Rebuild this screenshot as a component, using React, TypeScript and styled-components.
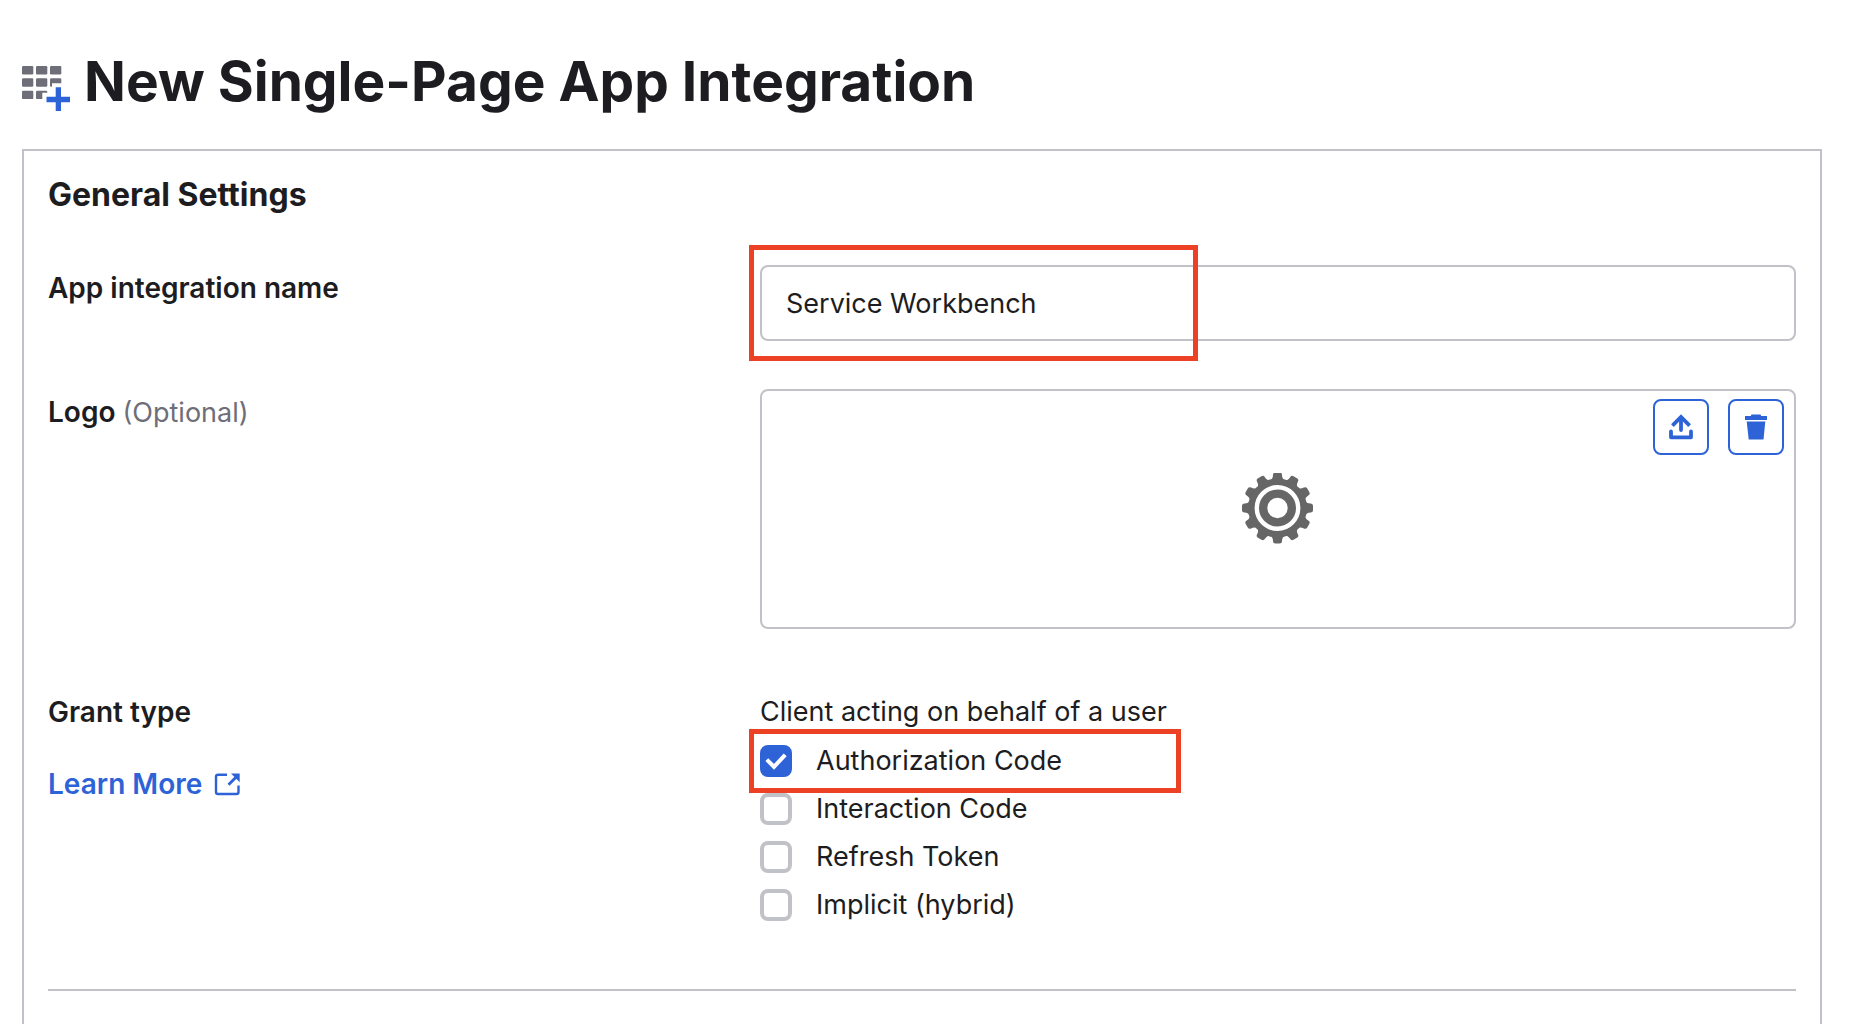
import React, { useState } from 'react';
import styled, { createGlobalStyle, css } from 'styled-components';

const color = {
  text: '#1d1d21',
  muted: '#6e6e78',
  line: '#c1c1c8',
  blue: '#2e63d8',
  red: '#ed4126',
  gear: '#666666',
};

const GlobalStyle = createGlobalStyle`
  *, *::before, *::after { box-sizing: border-box; }
  body {
    margin: 0;
    background: #ffffff;
    color: ${color.text};
    font-family: Inter, 'Liberation Sans', sans-serif;
    font-size: 27px;
    line-height: 46px;
  }
`;

const Page = styled.main`
  display: flex;
  flex-direction: column;
  min-height: 100vh;
  padding: 49px 34px 0 22px;
`;

const TitleBar = styled.header`
  display: flex;
  align-items: center;
  gap: 14px;
  margin-bottom: 36px;
`;

const TitleIcon = styled.svg`
  flex: none;
  width: 48px;
  height: 46px;
  margin-top: 14px;
`;

const Title = styled.h1`
  margin: 0;
  font-size: 55px;
  line-height: 64px;
  font-weight: 700;
`;

const Panel = styled.section`
  flex: 1;
  padding: 24px 24px 32px;
  border: 2px solid ${color.line};
  border-bottom: none;
`;

const PanelTitle = styled.h2`
  margin: 0 0 50px;
  font-size: 32px;
  line-height: 40px;
  font-weight: 700;
`;

const Row = styled.div<{ $gap: number }>`
  display: grid;
  grid-template-columns: 712fr 1036fr;
  margin-bottom: ${(p) => p.$gap}px;
`;

const labelText = css`
  display: block;
  font-size: 28px;
  font-weight: 600;
`;

const Label = styled.label`
  ${labelText}
`;

const LabelHeading = styled.span`
  ${labelText}
`;

const Optional = styled.span`
  color: ${color.muted};
  font-size: 27px;
  font-weight: 400;
`;

const Field = styled.div`
  position: relative;
`;

const TextInput = styled.input`
  display: block;
  width: 100%;
  height: 76px;
  padding: 0 24px;
  border: 2px solid ${color.line};
  border-radius: 8px;
  background: transparent;
  color: inherit;
  font: inherit;
  outline: none;
`;

const Highlight = styled.div<{ $top: number; $width: number; $height: number }>`
  position: absolute;
  z-index: 1;
  left: -11px;
  top: ${(p) => p.$top}px;
  width: ${(p) => p.$width}px;
  height: ${(p) => p.$height}px;
  border: 5px solid ${color.red};
  pointer-events: none;
`;

const LogoBox = styled.div`
  position: relative;
  display: flex;
  align-items: center;
  justify-content: center;
  height: 240px;
  border: 2px solid ${color.line};
  border-radius: 8px;
`;

const LogoActions = styled.div`
  position: absolute;
  top: 8px;
  right: 10px;
  display: flex;
  gap: 19px;
`;

const IconButton = styled.button`
  display: flex;
  align-items: center;
  justify-content: center;
  width: 56px;
  height: 56px;
  padding: 0;
  border: 2px solid ${color.blue};
  border-radius: 8px;
  background: #ffffff;
  color: ${color.blue};
  cursor: pointer;
`;

const LearnMore = styled.a`
  display: inline-flex;
  align-items: center;
  gap: 12px;
  margin-top: 26px;
  color: ${color.blue};
  font-size: 28px;
  font-weight: 600;
  text-decoration: none;
`;

const CheckList = styled.div`
  position: relative;
  margin-top: 2px;
`;

const CheckRow = styled.label`
  display: flex;
  align-items: center;
  gap: 24px;
  height: 48px;
  cursor: pointer;
`;

const CheckControl = styled.span`
  display: grid;
  width: 32px;
  height: 32px;

  & > * {
    grid-area: 1 / 1;
  }
`;

const CheckBox = styled.input`
  appearance: none;
  width: 32px;
  height: 32px;
  margin: 0;
  border: 4px solid ${color.line};
  border-radius: 8px;
  background: #ffffff;

  &:checked {
    border-color: ${color.blue};
    background: ${color.blue};
  }
`;

const Tick = styled.svg`
  width: 32px;
  height: 32px;
  pointer-events: none;
`;

const Divider = styled.hr`
  margin: 0;
  border: 0;
  border-top: 2px solid ${color.line};
`;

const AddAppIcon = () => (
  <TitleIcon viewBox="0 0 48 46" aria-hidden="true">
    <g fill={color.muted}>
      {[1, 13.3, 25.7].map((y) =>
        [0, 14, 28].map((x) => <rect key={`${x}-${y}`} x={x} y={y} width="11.3" height="8.4" rx="1.2" />)
      )}
    </g>
    <path fill="#ffffff" d="M30 18.3H43V27.7H48V46H26V38H20.3V27.7H26V24H30Z" />
    <path fill={color.blue} d="M33.7 22.3H39V31.7H48V37.3H39V46H33.7V37.3H24.5V31.7H33.7Z" />
  </TitleIcon>
);

const UploadIcon = () => (
  <svg width="24" height="26" viewBox="0 0 24 26" fill="none" stroke="currentColor" strokeWidth="3.8" aria-hidden="true">
    <path d="M12 16V4" strokeLinecap="round" />
    <path d="M3.4 11.6L12 3l8.6 8.6" />
    <path d="M2 17.5v5.8h20v-5.8" strokeLinecap="round" strokeLinejoin="round" />
  </svg>
);

const TrashIcon = () => (
  <svg width="22" height="26" viewBox="0 0 22 26" fill="currentColor" aria-hidden="true">
    <path d="M6 1.2Q6 .5 6.8.5h8.4q.8 0 .8.7V2h6v4H0V2h6zM1.7 7.5h18.6l-1.8 18H3.7z" />
  </svg>
);

const ExternalIcon = () => (
  <svg width="26" height="24" viewBox="0 0 26 24" fill="none" stroke="currentColor" strokeWidth="2.4" aria-hidden="true">
    <path d="M13 2.7H4Q2 2.7 2 4.7V20q0 2 2 2h18.5q2 0 2-2v-6.5" />
    <path d="M14.5 12.8L22 5.3" strokeWidth="2.8" />
    <path d="M17 1.5h8.7v8.7z" fill="currentColor" stroke="none" />
  </svg>
);

const GearIcon = () => (
  <svg width="72" height="72" viewBox="-35.5 -35 72 72" role="img" aria-label="App logo">
    <g fill={color.gear}>
      {Array.from({ length: 12 }, (_, i) => (
        <path key={i} transform={`rotate(${i * 30})`} d="M-8-27Q-4.5-29-4.5-33Q-4.5-35.5-2-35.5H2Q4.5-35.5 4.5-33Q4.5-29 8-27Z" />
      ))}
      <circle r="29.5" />
    </g>
    <circle r="20.7" fill="none" stroke="#ffffff" strokeWidth="4.4" />
    <circle r="10.2" fill="#ffffff" />
  </svg>
);

const grants = ['Authorization Code', 'Interaction Code', 'Refresh Token', 'Implicit (hybrid)'];

export default function App() {
  const [name, setName] = useState('Service Workbench');
  const [selected, setSelected] = useState<string[]>(['Authorization Code']);

  const toggle = (grant: string) =>
    setSelected((s) => (s.includes(grant) ? s.filter((g) => g !== grant) : [...s, grant]));

  return (
    <>
      <GlobalStyle />
      <Page>
        <TitleBar>
          <AddAppIcon />
          <Title>New Single-Page App Integration</Title>
        </TitleBar>
        <Panel>
          <PanelTitle>General Settings</PanelTitle>
          <Row $gap={48}>
            <Label htmlFor="app-name">App integration name</Label>
            <Field>
              <TextInput id="app-name" type="text" value={name} onChange={(e) => setName(e.target.value)} />
              <Highlight $top={-20} $width={449} $height={116} />
            </Field>
          </Row>
          <Row $gap={60}>
            <LabelHeading>
              Logo <Optional>(Optional)</Optional>
            </LabelHeading>
            <LogoBox>
              <GearIcon />
              <LogoActions>
                <IconButton type="button" aria-label="Upload logo">
                  <UploadIcon />
                </IconButton>
                <IconButton type="button" aria-label="Delete logo">
                  <TrashIcon />
                </IconButton>
              </LogoActions>
            </LogoBox>
          </Row>
          <Row $gap={60}>
            <div>
              <LabelHeading id="grant-type">Grant type</LabelHeading>
              <LearnMore href="#learn-more">
                Learn More
                <ExternalIcon />
              </LearnMore>
            </div>
            <div role="group" aria-labelledby="grant-type">
              <div>Client acting on behalf of a user</div>
              <CheckList>
                {grants.map((grant) => (
                  <CheckRow key={grant}>
                    <CheckControl>
                      <CheckBox type="checkbox" checked={selected.includes(grant)} onChange={() => toggle(grant)} />
                      {selected.includes(grant) && (
                        <Tick viewBox="0 0 32 32" fill="none" stroke="#ffffff" strokeWidth="4" aria-hidden="true">
                          <path d="M6.8 14.6l7.2 7.2L25.2 9.8" />
                        </Tick>
                      )}
                    </CheckControl>
                    {grant}
                  </CheckRow>
                ))}
                <Highlight $top={-8} $width={432} $height={64} />
              </CheckList>
            </div>
          </Row>
          <Divider />
        </Panel>
      </Page>
    </>
  );
}
